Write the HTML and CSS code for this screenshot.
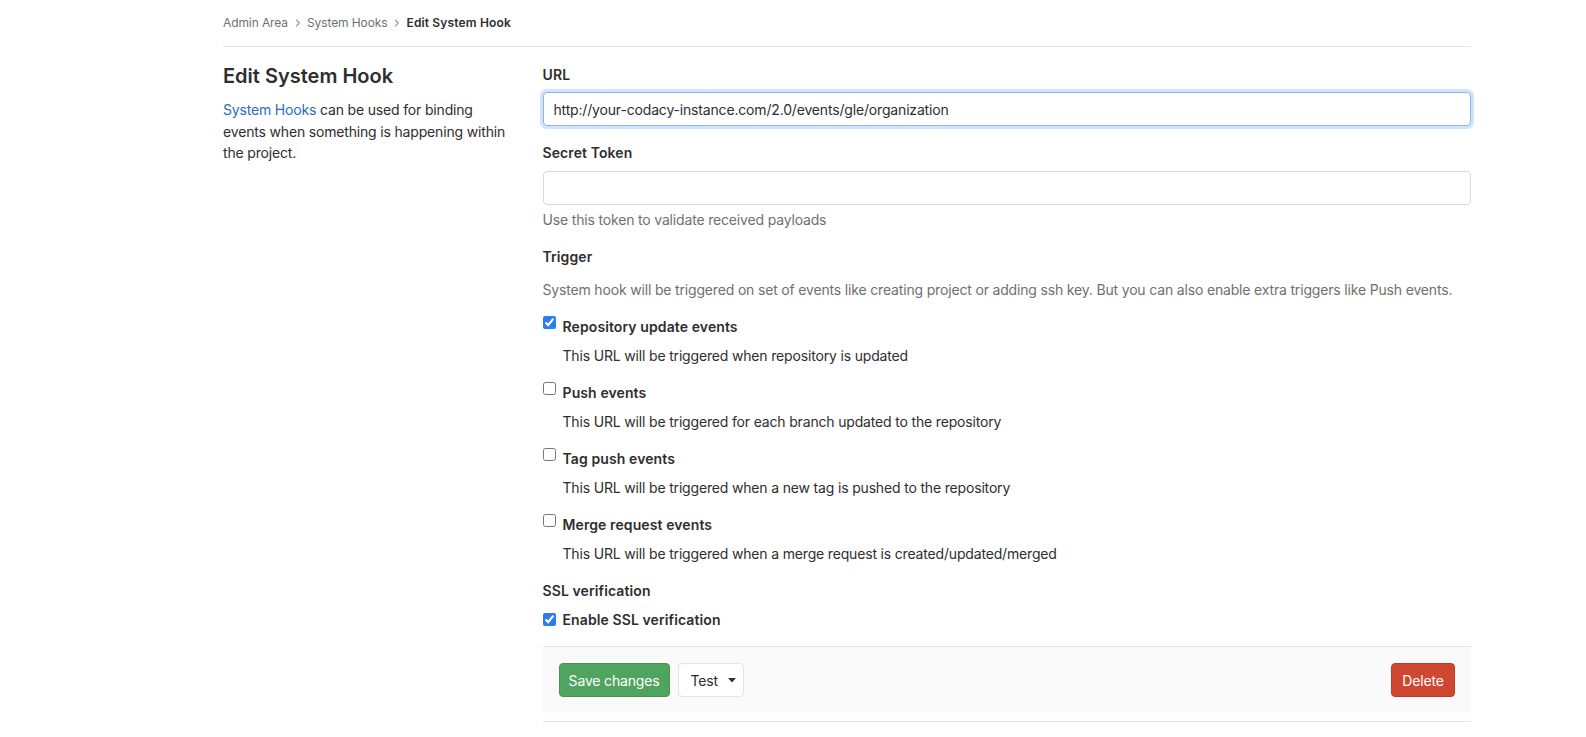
FILE: index.html
```html
<!DOCTYPE html>
<html lang="en">
<head>
<meta charset="utf-8">
<title>Edit System Hook</title>
<link rel="stylesheet" href="styles.css">
</head>
<body>
<div class="page">
  <nav class="breadcrumbs">
    <a class="crumb" href="#">Admin Area</a>
    <svg class="chev" width="8" height="8" viewBox="0 0 8 8"><path d="M2.5 1.2 L5.3 4 L2.5 6.8" fill="none" stroke="#8f8f8f" stroke-width="1.1" stroke-linecap="round" stroke-linejoin="round"/></svg>
    <a class="crumb" href="#">System Hooks</a>
    <svg class="chev" width="8" height="8" viewBox="0 0 8 8"><path d="M2.5 1.2 L5.3 4 L2.5 6.8" fill="none" stroke="#8f8f8f" stroke-width="1.1" stroke-linecap="round" stroke-linejoin="round"/></svg>
    <span class="crumb current">Edit System Hook</span>
  </nav>

  <div class="layout">
    <aside class="intro">
      <h4 class="intro-title">Edit System Hook</h4>
      <p class="intro-text"><a href="#" class="link">System Hooks</a> can be used for binding events when something is happening within the project.</p>
    </aside>

    <form class="hook-form">
      <div class="form-group">
        <label class="field-label">URL</label>
        <input class="text-input focused" type="text" value="http://your-codacy-instance.com/2.0/events/gle/organization">
      </div>
      <div class="form-group">
        <label class="field-label secret">Secret Token</label>
        <input class="text-input" type="text" value="">
        <p class="help">Use this token to validate received payloads</p>
      </div>
      <div class="form-group">
        <label class="field-label trigger">Trigger</label>
        <p class="help trigger-help">System hook will be triggered on set of events like creating project or adding ssh key. But you can also enable extra triggers like Push events.</p>

        <div class="check-item">
          <input class="check" type="checkbox" checked>
          <span class="check-label">Repository update events</span>
          <span class="check-desc">This URL will be triggered when repository is updated</span>
        </div>
        <div class="check-item">
          <input class="check" type="checkbox">
          <span class="check-label">Push events</span>
          <span class="check-desc">This URL will be triggered for each branch updated to the repository</span>
        </div>
        <div class="check-item">
          <input class="check" type="checkbox">
          <span class="check-label">Tag push events</span>
          <span class="check-desc">This URL will be triggered when a new tag is pushed to the repository</span>
        </div>
        <div class="check-item last">
          <input class="check" type="checkbox">
          <span class="check-label">Merge request events</span>
          <span class="check-desc">This URL will be triggered when a merge request is created/updated/merged</span>
        </div>
      </div>
      <div class="form-group ssl">
        <label class="field-label">SSL verification</label>
        <div class="check-item single">
          <input class="check" type="checkbox" checked>
          <span class="check-label">Enable SSL verification</span>
        </div>
      </div>

      <div class="form-actions">
        <div class="actions-left">
          <button type="button" class="btn btn-success">Save changes</button>
          <button type="button" class="btn btn-default">Test <svg class="caret" width="8" height="5" viewBox="0 0 8 5"><path d="M0 0 H8 L4 4.5 Z" fill="#333"/></svg></button>
        </div>
        <button type="button" class="btn btn-danger">Delete</button>
      </div>
      <div class="bottom-line"></div>
    </form>
  </div>
</div>
</body>
</html>
```

FILE: styles.css
```css
* { box-sizing: border-box; }

html, body {
  margin: 0;
  padding: 0;
  background: #fff;
}

body {
  font-family: Inter, "Noto Sans", "Liberation Sans", sans-serif;
  font-size: 14px;
  line-height: 21px;
  color: #2e2e2e;
  letter-spacing: -0.17px;
}

.page {
  margin-left: 223px;
  width: 1248px;
}

.breadcrumbs {
  height: 47px;
  border-bottom: 1px solid #e5e5e5;
  display: flex;
  align-items: center;
  font-size: 12px;
  letter-spacing: -0.1px;
  padding-bottom: 1px;
}

.crumb {
  color: #707070;
  text-decoration: none;
}

.crumb.current {
  color: #2e2e2e;
  font-weight: 600;
  letter-spacing: 0.15px;
}

.chev {
  margin: 0 5px 0 6px;
  display: block;
}

.layout {
  display: grid;
  grid-template-columns: 289.5px 928.5px;
  column-gap: 30px;
  align-items: start;
}

.intro-title {
  margin: 17px 0 11px;
  font-size: 20px;
  line-height: 24px;
  font-weight: 600;
  letter-spacing: 0;
  color: #2e2e2e;
}

.intro-text {
  margin: 0;
  line-height: 21.5px;
}

.link {
  color: #2b6cc4;
  text-decoration: none;
}

.hook-form {
  padding-top: 17px;
}

.form-group {
  margin-bottom: 16px;
}

.field-label {
  display: block;
  font-weight: 600;
  letter-spacing: 0.1px;
  margin-bottom: 7px;
  color: #2e2e2e;
}

.field-label.secret {
  margin-bottom: 8px;
}

.field-label.trigger {
  margin-bottom: 12px;
}

.text-input {
  display: block;
  width: 100%;
  height: 34px;
  padding: 0 10px;
  border: 1px solid #dbdbdb;
  border-radius: 4px;
  font-family: inherit;
  font-size: 14px;
  letter-spacing: -0.17px;
  color: #2e2e2e;
  background: #fff;
  outline: none;
}

.text-input.focused {
  border-color: #8ab4f4;
  box-shadow: 0 0 0 3px #d3e3fb;
}

.help {
  margin: 4px 0 0;
  color: #707070;
}

.help.trigger-help {
  margin: 0 0 16px;
}

.check-item {
  display: grid;
  grid-template-columns: 20px auto;
  row-gap: 8px;
  margin-bottom: 16px;
}

.check-item.last {
  margin-bottom: 0;
}

.check-item.single {
  margin-bottom: 0;
  align-items: center;
}

.check {
  width: 13px;
  height: 13px;
  margin: 0;
  align-self: start;
  accent-color: #2b7df6;
}

.check-item.single .check {
  align-self: center;
}

.check-label {
  font-weight: 600;
  letter-spacing: 0.1px;
}

.check-desc {
  grid-column: 2;
}

.form-group.ssl .field-label {
  margin-bottom: 8px;
}

.form-actions {
  display: flex;
  justify-content: space-between;
  align-items: center;
  background: #fafafa;
  border-top: 1px solid #e5e5e5;
  padding: 16px;
}

.actions-left {
  display: flex;
  gap: 8px;
}

.btn {
  height: 34px;
  display: inline-flex;
  align-items: center;
  padding: 0 11px;
  font-family: inherit;
  font-size: 14px;
  letter-spacing: -0.17px;
  border-radius: 4px;
  border: 1px solid transparent;
  cursor: pointer;
}

.btn-success {
  background: #4fa55f;
  border-color: #44964f;
  color: #fff;
  width: 111px;
  justify-content: center;
  padding: 0;
}

.btn-default {
  background: #fff;
  border-color: #e3e3e3;
  color: #2e2e2e;
  width: 66px;
  padding: 0 0 0 12px;
}

.caret {
  margin-left: 10px;
  display: block;
}

.btn-danger {
  background: #cf4731;
  border-color: #b93e2a;
  color: #fff;
  width: 64px;
  justify-content: center;
  padding: 0;
}

.bottom-line {
  margin-top: 8px;
  border-top: 1px solid #e5e5e5;
}
```
